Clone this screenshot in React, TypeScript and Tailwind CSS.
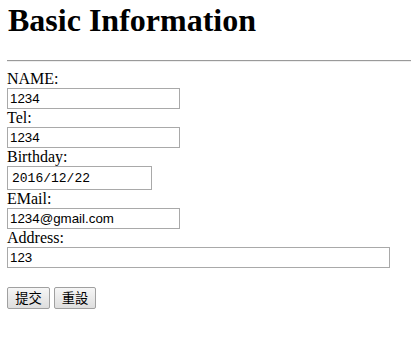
import React from "react";

const inputCls =
  "block h-[21px] border border-[#a9a9a9] bg-white px-[2px] text-[13.333px] leading-[17px] text-black outline-none [font-family:'Liberation_Sans',Arial,sans-serif]";

const btnCls =
  "h-[22px] rounded-[2px] border border-[#a0a0a0] bg-gradient-to-b from-[#f6f6f6] to-[#dedede] text-[13.333px] leading-[20px] text-black [font-family:'Noto_Sans_CJK_TC','Noto_Sans_CJK_SC',sans-serif]";

function Label({ children }: { children: React.ReactNode }) {
  return <div className="h-[18px] text-[16px] leading-[18px]">{children}</div>;
}

export default function App() {
  return (
    <div className="min-h-[362px] bg-white text-black [font-family:'Liberation_Serif','Times_New_Roman',serif]">
      <h1 className="pl-[8px] pt-[2px] text-[32px] font-bold leading-[37px]">Basic Information</h1>
      <div className="ml-[7px] mt-[21px] h-[2px] border-t border-b border-t-[#9a9a9a] border-b-[#eeeeee]" />
      <form className="pl-[7px] pt-[8px]" onSubmit={(e) => e.preventDefault()}>
        <Label>NAME:</Label>
        <input readOnly value="1234" className={`${inputCls} w-[173px]`} />
        <Label>Tel:</Label>
        <input readOnly value="1234" className={`${inputCls} w-[173px]`} />
        <Label>Birthday:</Label>
        <input
          readOnly
          value="2016/12/22"
          className="block h-[24px] w-[145px] border border-[#a9a9a9] bg-white pl-[4px] text-[13px] leading-[20px] text-black outline-none [font-family:'Liberation_Mono','Courier_New',monospace]"
        />
        <Label>EMail:</Label>
        <input readOnly value="1234@gmail.com" className={`${inputCls} w-[173px]`} />
        <Label>Address:</Label>
        <input readOnly value="123" className={`${inputCls} w-[383px]`} />
        <div className="mt-[19px] flex gap-[4px]">
          <button type="submit" className={`${btnCls} w-[43px]`}>
            提交
          </button>
          <button type="reset" className={`${btnCls} w-[42px]`}>
            重設
          </button>
        </div>
      </form>
    </div>
  );
}
